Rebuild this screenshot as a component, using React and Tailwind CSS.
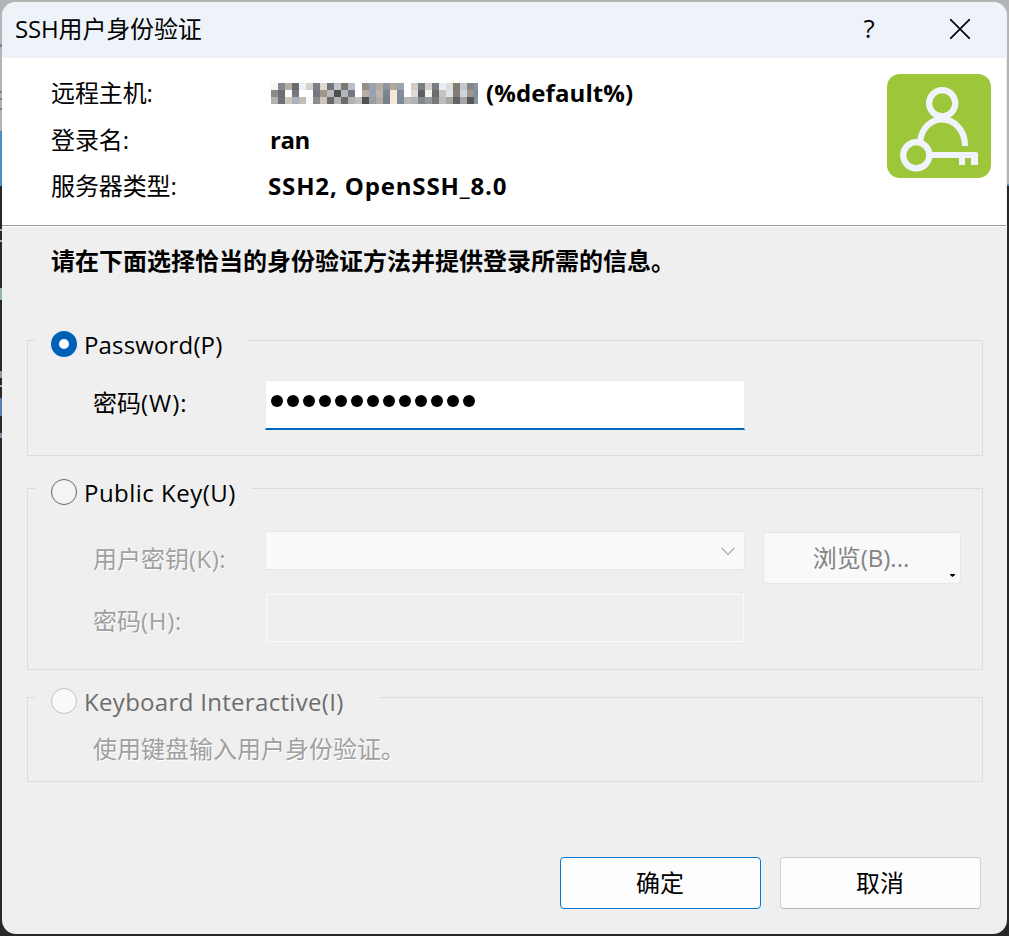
import { useState } from "react";
import clsx from "clsx";

// blurred-out host address, one string per row of blocks
const MOSAIC = [
  "f8f5f0 848890 b5afaa 6b6a6c e9f2fb d5d0c9 7b7f88 e2dad0 75767a c3c5c6 7b7873 b9bfc8 ffffff 988e88 9ba3b0 b5ada5 8a94a2 b0a89c 9aa5b2 ffffff d3cbc6 768084 d5cfcc 7a7d80 e6edf6 dfdcd8 7f7c74 c3c8d0 86857f 8394a8",
  "8a8a8a 6b6d73 fafaf8 77777d ffffff ffffff 74767c a39488 bababa 505152 adb8ba 747686 ffffff b6aea6 98a3b3 bdb5ad 7b8692 f6e8d9 808c9a ffffff dedad7 5d5f66 f3f1f0 6d6a6c c5c3c1 dde4ea 827d74 cdd6e0 9f958b 7a8fa8",
  "b5b1ac 707176 cdc4ba a9b3c0 c0bcb6 f3f8fe 8c8b89 cfc4ba 696a6c b4b4b4 6b6b6b b0b3b5 c0c0c0 505254 9a9ca0 b2aca6 77818a f6e8d9 7f8a97 b9b9b9 b3b3b3 84878a 999a9b 78797b bdbdbd aaa59e 5f6564 a5a5a5 55575c 8b95a0",
];

function HiddenHost() {
  return (
    <span className="flex h-[21px] w-[207px] flex-col overflow-hidden">
      {MOSAIC.map((row, i) => (
        <span key={i} className="flex">
          {row.split(" ").map((c, j) => (
            <span
              key={j}
              className="h-[7px] w-[7px] shrink-0"
              style={{ backgroundColor: `#${c}` }}
            />
          ))}
        </span>
      ))}
    </span>
  );
}

function UserKeyIcon() {
  return (
    <svg width="104" height="104" viewBox="0 0 104 104" fill="none">
      <rect width="104" height="104" rx="13" fill="#9dc63b" />
      <g stroke="#f1f4fd" strokeWidth="6.2">
        <circle cx="55.2" cy="29.3" r="13.1" />
        <path d="M33 68c1.5-14 11-22.700 22.200-22.700S78 55 78 72" />
        <circle cx="29.300" cy="81.300" r="13.100" fill="#9dc63b" />
      </g>
      <path
        d="M44 78h45q2 0 2 2v11h-7v-7h-6v7h-6v-7H44z"
        fill="#f1f4fd"
      />
    </svg>
  );
}

function Radio({ checked, disabled, onClick }) {
  return (
    <button
      type="button"
      role="radio"
      aria-checked={checked}
      disabled={disabled}
      onClick={onClick}
      className={clsx(
        "h-[26px] w-[26px] shrink-0 rounded-full",
        checked && "border-8 border-[#005fb8] bg-white",
        !checked && !disabled && "border-[1.5px] border-[#666] bg-[#f4f4f4]",
        disabled && "border-[1.5px] border-[#c3c3c3] bg-[#fafafa]"
      )}
    />
  );
}

function Group({ label, checked, disabled, onSelect, legendClass, textClass, className, children }) {
  return (
    <section className={clsx("mr-6 ml-[25px] border border-[#dcdcdc]", className)}>
      <div
        className={clsx(
          "-mt-[15px] ml-[7px] flex h-9 items-center gap-[7px] bg-[#efefef] pl-4",
          legendClass
        )}
      >
        <Radio checked={checked} disabled={disabled} onClick={onSelect} />
        <span
          className={clsx(
            "relative top-px whitespace-nowrap",
            disabled && "text-[#6d6d6d]",
            textClass
          )}
        >
          {label}
        </span>
      </div>
      {children}
    </section>
  );
}

function InfoRow({ label, children }) {
  return (
    <div className="flex h-[46.5px] items-center">
      <span className="w-[217px] shrink-0 tracking-[-0.1px]">{label}</span>
      {children}
    </div>
  );
}

// slivers of the terminal window behind the dialog
const EDGE_LEFT =
  "bg-[linear-gradient(to_bottom,#b4b4b4_0,#b4b4b4_44px,#858585_44px,#858585_47px,#b4b4b4_47px,#b4b4b4_91px,#808080_91px,#808080_93px,#b4b4b4_93px,#b4b4b4_98px,#808080_98px,#808080_100px,#b4b4b4_100px,#b4b4b4_108px,#808080_108px,#808080_110px,#b4b4b4_110px,#b4b4b4_131px,#4f8fc0_131px,#4f8fc0_186px,#28282a_186px,#28282a_229px,#aaa_229px,#aaa_231px,#28282a_231px,#28282a_240px,#aaa_240px,#aaa_242px,#28282a_242px,#28282a_288px,#8fb5b5_288px,#8fb5b5_300px,#28282a_300px,#28282a_371px,#909a90_371px,#909a90_378px,#28282a_378px,#28282a_385px,#aaa_385px,#aaa_387px,#28282a_387px,#28282a_398px,#5580b0_398px,#5580b0_416px,#28282a_416px,#28282a_433px,#8090a0_433px,#8090a0_438px,#28282a_438px)]";
const EDGE_RIGHT =
  "bg-[linear-gradient(to_bottom,#b4b4b4_0,#b4b4b4_184px,#4f8fc0_184px,#4f8fc0_186px,#28282a_186px)]";

export default function App() {
  const [method, setMethod] = useState("password");

  return (
    <div className="relative isolate flex h-[936px] w-[1009px] flex-col overflow-hidden p-[2px] font-['Open_Sans','Noto_Sans_CJK_SC',sans-serif] text-[24px] leading-[36px] text-black">
      <div className="absolute inset-0 -z-10 flex">
        <div className={clsx("w-1/2", EDGE_LEFT)} />
        <div className={clsx("w-1/2", EDGE_RIGHT)} />
      </div>

      <div className="flex grow flex-col overflow-hidden rounded-[14px] bg-[#efefef]">
        {/* TITLE BAR */}
        <header className="flex h-14 shrink-0 items-center bg-[#edf3f8] pb-[2px] pl-[13px]">
          <h1 className="grow tracking-[-0.15px]">SSH用户身份验证</h1>
          <button type="button" aria-label="Help" className="relative right-px bottom-px w-5 text-center font-medium text-[26px]">
            ?
          </button>
          <button type="button" aria-label="Close" className="mr-[37px] ml-[70px]">
            <svg width="20" height="20" viewBox="0 0 20 20" stroke="#000" strokeWidth="1.7">
              <path d="M0 0l20 20M20 0L0 20" />
            </svg>
          </button>
        </header>

        {/* CONNECTION INFO */}
        <div className="mr-px flex h-[168px] shrink-0 justify-between border-b border-[#999] bg-white pt-[12px] pr-[15px] pl-[49px]">
          <div>
            <InfoRow label="远程主机:">
              <span className="flex items-center gap-2 pl-[3px] font-bold">
                <HiddenHost />
                <span className="tracking-[0.1px]">(%default%)</span>
              </span>
            </InfoRow>
            <InfoRow label="登录名:">
              <span className="pl-[2px] font-bold tracking-[-0.4px]">ran</span>
            </InfoRow>
            <InfoRow label="服务器类型:">
              <span className="font-bold tracking-[0.85px]">SSH2, OpenSSH_8.0</span>
            </InfoRow>
          </div>
          <div className="pt-1">
            <UserKeyIcon />
          </div>
        </div>

        {/* AUTH METHODS */}
        <main className="grow border-t border-white">
          <h2 className="h-[70px] pl-[49px] leading-[68px] font-bold">
            请在下面选择恰当的身份验证方法并提供登录所需的信息。
          </h2>

          <Group
            label="Password(P)"
            checked={method === "password"}
            onSelect={() => setMethod("password")}
            className="mt-[43px] h-[116px]"
            legendClass="w-[212px]"
            textClass="tracking-[0.15px]"
          >
            <div className="mt-[18px] flex items-center pl-[65px]">
              <label htmlFor="pw" className="w-[172px] pb-1">
                密码<span className="tracking-[1px]">(W):</span>
              </label>
              <div
                id="pw"
                className="flex h-[50px] w-[480px] gap-[4px] border border-b-2 border-[#e8ecf0] border-b-[#0067c0] bg-white pt-[14px] pl-[5px]"
              >
                {Array.from({ length: 13 }, (_, i) => (
                  <span key={i} className="h-[11.5px] w-3 rounded-full bg-black" />
                ))}
              </div>
            </div>
          </Group>

          <Group
            label="Public Key(U)"
            checked={method === "key"}
            onSelect={() => setMethod("key")}
            className="mt-8 h-[182px]"
            legendClass="w-[216px]"
            textClass="tracking-[0.48px]"
          >
            <div className="mt-[21px] flex items-start pl-[65px] text-[#a0a0a0]">
              <span className="w-[172px] pt-[10px] [text-shadow:1px_1px_0_#fff]">
                用户密钥<span className="tracking-[0.5px]">(K):</span>
              </span>
              <div className="flex h-[39px] w-[480px] items-center justify-end rounded-[2px] border border-[#e8e8e8] bg-[#fafafa] pr-[9px]">
                <svg width="14" height="8" viewBox="0 0 14 8" fill="none" stroke="#a6a6a6" strokeWidth="1.2">
                  <path d="M.5.8L7 7.300L13.500.8" />
                </svg>
              </div>
              <button
                type="button"
                disabled
                className="relative mt-px ml-[18px] h-[52px] w-[198px] rounded-[4px] border border-[#e6e6e6] bg-[#f9f9f9] pr-[2px] text-[#838383]"
              >
                浏览(B)...
                <svg width="5" height="3" className="absolute right-[5px] bottom-[6px]">
                  <path d="M0 0h5v1L2.500 3L0 1z" fill="#000" />
                </svg>
              </button>
            </div>
            <div className="mt-[10px] flex items-center pl-[65px] text-[#a0a0a0]">
              <span className="relative top-[3px] w-[173px] [text-shadow:1px_1px_0_#fff]">
                密码<span className="tracking-[0.7px]">(H):</span>
              </span>
              <div className="h-12 w-[478px] border border-[#fbfbfb]" />
            </div>
          </Group>

          <Group
            label="Keyboard Interactive(I)"
            disabled
            className="mt-[27px] h-[85px]"
            legendClass="w-[345px]"
            textClass="tracking-[0.31px]"
          >
            <p className="mt-[12px] pl-[65px] text-[#a0a0a0] [text-shadow:1px_1px_0_#fff]">
              使用键盘输入用户身份验证。
            </p>
          </Group>

          {/* BUTTONS */}
          <div className="mt-[75px] flex justify-end gap-[19px] pr-[26px]">
            <button
              type="button"
              className="h-[52px] w-[201px] rounded-[4px] border border-[#0078d4] bg-[#fdfdfd] pr-px"
            >
              确定
            </button>
            <button
              type="button"
              className="h-[52px] w-[201px] rounded-[4px] border border-[#d0d0d0] border-b-[#bbb] bg-[#fdfdfd] pr-px"
            >
              取消
            </button>
          </div>
        </main>
      </div>
    </div>
  );
}
